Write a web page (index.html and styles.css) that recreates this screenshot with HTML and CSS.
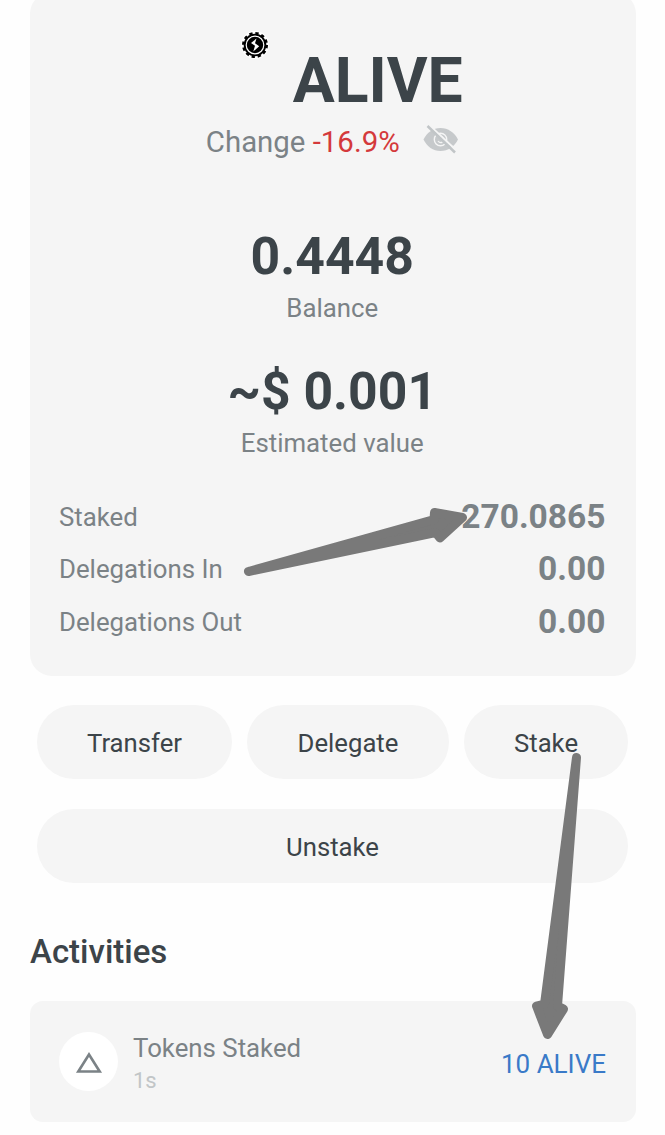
FILE: index.html
```html
<!DOCTYPE html>
<html lang="en">
<head>
    <meta charset="UTF-8"/>
    <title>ALIVE</title>
    <link rel="stylesheet" href="styles.css">
</head>
<body>
<div class="card">
    <div class="token">
        <svg class="tokenIcon" viewBox="0 0 28 28">
            <circle cx="14" cy="14" r="14" fill="#fff"/>
            <circle cx="14" cy="14" r="11.3" fill="#000"/>
            <circle cx="14" cy="14" r="11.7" fill="none" stroke="#000" stroke-width="2.6" stroke-dasharray="3.3 2.826"/>
            <circle cx="14" cy="14" r="8.8" fill="none" stroke="#fff" stroke-width="1.2"/>
            <path d="M15.5 7.500L10 12L14 14.800L12.300 20.500L18.200 15.300L14 12.200Z" fill="#fff"/>
        </svg>
        <h1 class="tokenName">ALIVE</h1>
    </div>
    <div class="change">
        <span>Change <span class="down">-16.9%</span></span>
        <svg class="eye" viewBox="0 0 36 30">
            <path d="M0.5 14.5C4 7.5 10 3 17.5 3S31.5 7.5 35 14.5C31.5 21.5 25 26 17.5 26S4 21.5 0.5 14.5Z" fill="#c6c9cb"/>
            <circle cx="17.5" cy="14.5" r="6.2" fill="none" stroke="#f5f5f5" stroke-width="1.4"/>
            <path d="M16 12A3 3 0 1 1 15 16" fill="none" stroke="#f5f5f5" stroke-width="1.2"/>
            <path d="M6 0L34 26" stroke="#f5f5f5" stroke-width="2.2"/>
            <path d="M4.500 1L32 27.500" stroke="#c1c5c7" stroke-width="2.5"/>
        </svg>
    </div>
    <div class="amount balance">0.4448</div>
    <div class="caption">Balance</div>
    <div class="amount value">~$ 0.001</div>
    <div class="caption">Estimated value</div>
    <div class="rows">
        <div class="row"><span>Staked</span><b>270.0865</b></div>
        <div class="row"><span>Delegations In</span><b>0.00</b></div>
        <div class="row"><span>Delegations Out</span><b>0.00</b></div>
    </div>
</div>
<div class="buttons">
    <button class="btn transfer">Transfer</button>
    <button class="btn delegate">Delegate</button>
    <button class="btn stake">Stake</button>
    <button class="btn unstake">Unstake</button>
</div>
<h2 class="heading">Activities</h2>
<div class="activity">
    <div class="activityIcon">
        <svg width="28" height="24" viewBox="0 0 28 24">
            <path d="M14 4.5L24.7 21.5H3.3Z" fill="none" stroke="#7b8286" stroke-width="2.6"/>
        </svg>
    </div>
    <div class="activityText">
        <div class="activityTitle">Tokens Staked</div>
        <div class="activityTime">1s</div>
    </div>
    <div class="activityAmount">10 ALIVE</div>
</div>
<!-- arrows over the page -->
<svg class="arrows" viewBox="0 0 665 1135">
    <path d="M248.5 571.5L434 519.5L434.5 512.5L462.5 517.5L440 538L435.500 532.5Z"/>
    <path d="M576.5 757.5L544.5 1004L536.5 1006L547.5 1034.500L563.5 1009L557.5 1006Z"/>
</svg>
</body>
</html>
```

FILE: styles.css
```css
body {
    margin: 0;
    height: 1135px;
    overflow: hidden;
    background-color: #fefefe;
    color: #3c4449;
    font-family: Roboto, sans-serif;
    display: flow-root;
    position: relative;
}

.card {
    margin: -8px 29.5px 0 30px;
    padding: 53px 30px 27.7px 29px;
    background-color: #f5f5f5;
    border-radius: 22px;
    text-align: center;
}

.token {
    display: flex;
    justify-content: center;
}

.tokenIcon {
    width: 28px;
    height: 28px;
    margin: -14px 24px 0 39px;
}

.tokenName {
    margin: 0;
    font-size: 62.5px;
    line-height: 72px;
    font-weight: bold;
}

.change {
    display: flex;
    justify-content: center;
    margin-top: 7.5px;
    font-size: 29.4px;
    line-height: 34px;
    color: #7b8286;
}

.down {
    color: #d4393b;
}

.eye {
    width: 36px;
    height: 30px;
    margin-left: 23px;
}

.amount {
    font-size: 51.7px;
    line-height: 60px;
    font-weight: bold;
}

.balance {
    margin-top: 68.5px;
}

.value {
    margin-top: 38.5px;
}

.caption {
    margin-top: 6px;
    font-size: 25.8px;
    line-height: 30px;
    color: #7b8286;
}

.rows {
    margin-top: 33px;
}

.row {
    display: flex;
    justify-content: space-between;
    font-size: 25.8px;
    line-height: 52.6px;
    color: #7b8286;
}

.row b {
    font-size: 33.5px;
}

.buttons {
    display: grid;
    grid-template-columns: 195px 202px 164px;
    gap: 29.5px 15px;
    margin: 29.5px 37px 0;
}

.btn {
    height: 74px;
    padding: 2px 0 0;
    border: 0;
    border-radius: 37px;
    background-color: #f5f5f5;
    color: #3c4449;
    font-family: inherit;
    font-size: 25.7px;
}

.unstake {
    grid-column: 1 / 4;
}

.heading {
    margin: 49px 30px 0;
    font-size: 33px;
    line-height: 40px;
    font-weight: 500;
}

.activity {
    display: flex;
    align-items: center;
    height: 121px;
    box-sizing: border-box;
    margin: 29.5px 29.5px 0 30px;
    padding: 0 29.5px 0 29px;
    border-radius: 13px;
    background-color: #f5f5f5;
}

.activityIcon {
    display: flex;
    align-items: center;
    justify-content: center;
    width: 59px;
    height: 59px;
    border-radius: 50%;
    background-color: #fff;
}

.activityText {
    flex: 1;
    margin: 3px 0 0 15px;
}

.activityTitle {
    font-size: 25.8px;
    line-height: 34px;
    color: #7b8286;
}

.activityTime {
    font-size: 22px;
    line-height: 31px;
    color: #c1c5c7;
}

.activityAmount {
    margin-top: 4px;
    font-size: 26px;
    color: #3a7ac8;
}

.arrows {
    position: absolute;
    top: 0;
    left: 0;
    width: 665px;
    height: 1135px;
    fill: #797979;
    stroke: #797979;
    stroke-width: 9px;
    stroke-linejoin: round;
}
```
